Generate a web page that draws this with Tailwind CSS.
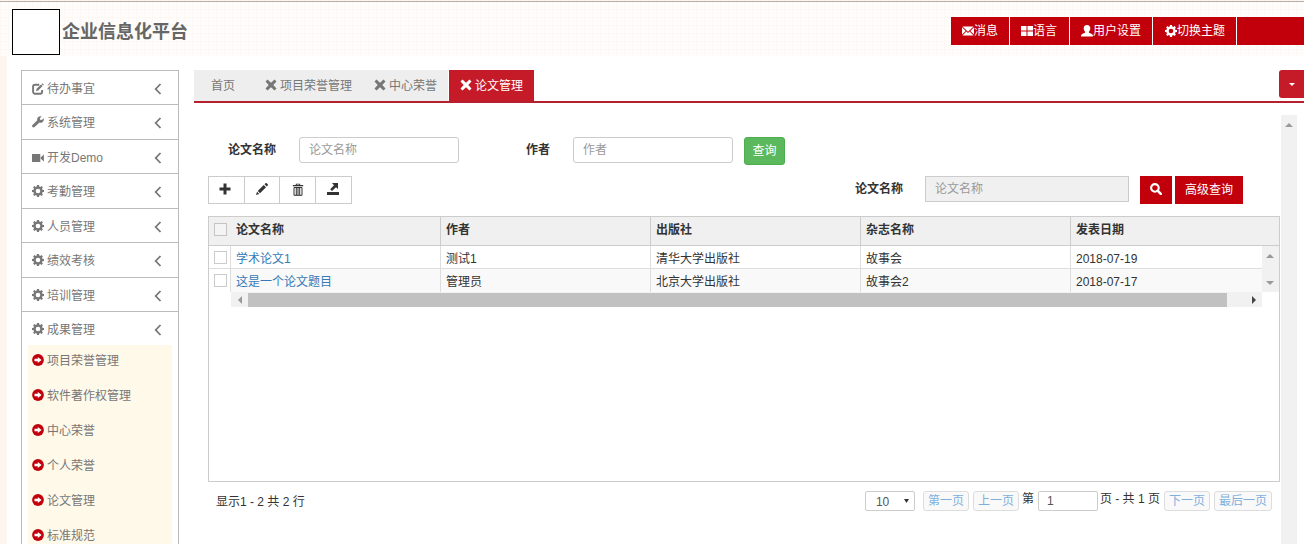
<!DOCTYPE html>
<html lang="zh-CN">
<head>
<meta charset="utf-8">
<title>企业信息化平台</title>
<script src="https://cdn.jsdelivr.net/npm/@tailwindcss/browser@4"></script>
</head>
<body class="flex h-screen flex-col overflow-hidden bg-white font-['Liberation_Sans','Noto_Sans_CJK_SC',sans-serif] text-xs text-[#333]">
<svg class="hidden" aria-hidden="true">
  <symbol id="edit" viewBox="0 0 12 12"><path d="M7.300 1.700H3A1.900 1.900 0 0 0 1.100 3.600v5.200a1.900 1.900 0 0 0 1.900 1.900h5.200a1.900 1.900 0 0 0 1.900-1.900V7" fill="none" stroke="currentColor" stroke-width="1.900"/><path d="M4 8.100l.6-2.300 4.400-4.300 1.600 1.600-4.400 4.400zM9.500 1l.8-.8 1.600 1.600-.8.8z" fill="currentColor"/></symbol>
  <symbol id="wrench" viewBox="0 0 12 12"><path d="M11.700 2.200L9.800 4.100 8.200 3.700 7.800 2.200 9.700.3C8.300-.1 6.900.2 6 1.200c-.8.8-1 2-.7 3L.5 8.900c-.6.6-.6 1.500 0 2.100.6.6 1.500.6 2.100 0L7.500 6.600c1.100.4 2.300.1 3.200-.7 1-1 1.400-2.400 1-3.700z" fill="currentColor"/></symbol>
  <symbol id="video" viewBox="0 0 12 12"><path d="M0 2h8.300v8H0zM8.800 5.300L11.900 2.500v7L8.800 6.700z" fill="currentColor"/></symbol>
  <symbol id="cog" viewBox="0 0 12 12"><path fill="currentColor" fill-rule="evenodd" d="M5 0h2l.3 1.600 1 .4L9.600 1.100 10.900 2.400 10 3.700l.4 1L12 5v2l-1.600.3-.4 1 .9 1.300-1.300 1.300L8.300 10l-1 .4L7 12H5l-.3-1.600-1-.4-1.300.9L1.100 9.600 2 8.300l-.4-1L0 7V5l1.600-.3.4-1L1.100 2.400 2.400 1.100 3.700 2l1-.4zM6 3.700a2.300 2.300 0 1 0 0 4.600 2.300 2.300 0 0 0 0-4.600z"/></symbol>
  <symbol id="chevron" viewBox="0 0 8 12"><path d="M6.500 1L1.700 6l4.800 5" fill="none" stroke="currentColor" stroke-width="1.800"/></symbol>
  <symbol id="go" viewBox="0 0 12 12"><circle cx="6" cy="6" r="5.900" fill="currentColor"/><path d="M2.500 4.800h3.300V2.900L9.600 6 5.800 9.100V7.200H2.500z" fill="#fff"/></symbol>
  <symbol id="mail" viewBox="0 0 12 10"><path d="M.4.500h11.200L6 5.800zM0 1.300L3.700 4.900 0 8.500zM12 1.300v7.200L8.300 4.900zM4.400 5.600L6 7.100l1.600-1.500 4 3.900H.4z" fill="currentColor"/></symbol>
  <symbol id="tiles" viewBox="0 0 12 10"><path d="M0 0h5.500v4.500H0zM6.500 0H12v4.500H6.500zM0 5.500h5.500V10H0zM6.500 5.500H12V10H6.500z" fill="currentColor"/></symbol>
  <symbol id="user" viewBox="0 0 12 12"><path d="M6 0c2.100 0 3.300 1.300 3.300 3.200 0 1.300-.6 2.700-1.400 3.500v1c1.700.7 3.700 1.400 3.900 2.400.1.500.2 1 .2 1.400H0c0-.4.1-.9.200-1.400.2-1 2.200-1.700 3.900-2.400v-1c-.8-.8-1.400-2.200-1.400-3.500C2.700 1.300 3.900 0 6 0z" fill="currentColor"/></symbol>
  <symbol id="cross" viewBox="0 0 12 12"><path d="M2.500.5L6 3.700 9.500.5l2 2L8.300 6l3.200 3.500-2 2L6 8.300l-3.500 3.200-2-2L3.700 6 .5 2.500z" fill="currentColor"/></symbol>
  <symbol id="plus" viewBox="0 0 12 12"><path d="M4.500 .5h3v4h4v3h-4v4h-3v-4h-4v-3h4z" fill="currentColor"/></symbol>
  <symbol id="pencil" viewBox="0 0 12 12"><path d="M0 12l1-3.300 2.300 2.300zM1.700 8l6-6L10 4.300l-6 6zM8.500 1.200L9.500.3c.4-.4.8-.4 1.200 0l1 1c.4.4.4.8 0 1.200l-.9 1z" fill="currentColor"/></symbol>
  <symbol id="trash" viewBox="0 0 12 13"><path d="M.8 3.200V2h3V.7h4.400V2h3v1.200M4.800 2h2.400v-.4H4.800z" fill="currentColor" fill-rule="evenodd"/><path d="M2 4.500h8v7.800H2zM4.300 5v7M6 5v7M7.700 5v7" fill="none" stroke="currentColor"/></symbol>
  <symbol id="export" viewBox="0 0 12 12"><path d="M0 9h12v3H0zM5 0h6v6L9 4.200 5 8 3.200 6.200 7 2.200z" fill="currentColor"/></symbol>
  <symbol id="search" viewBox="0 0 12 12"><circle cx="4.900" cy="4.900" r="3.800" fill="none" stroke="currentColor" stroke-width="2.100"/><path d="M7.600 7.600l3.200 3.200" stroke="currentColor" stroke-width="2.600" stroke-linecap="round"/></symbol>
  <symbol id="up" viewBox="0 0 8 4"><path d="M4 0l4 4H0z" fill="currentColor"/></symbol>
  <symbol id="down" viewBox="0 0 8 4"><path d="M0 0h8L4 4z" fill="currentColor"/></symbol>
  <symbol id="caret" viewBox="0 0 5 4"><path d="M0 0h5L2.500 4z" fill="currentColor"/></symbol>
  <symbol id="left" viewBox="0 0 4 8"><path d="M4 0v8L0 4z" fill="currentColor"/></symbol>
  <symbol id="right" viewBox="0 0 4 8"><path d="M0 0v8l4-4z" fill="currentColor"/></symbol>
</svg>

<header class="flex h-14 shrink-0 items-start justify-between border-t border-[#fdf5f0] bg-[#fffdfb] bg-[linear-gradient(#fdf8f3_1px,transparent_1px),linear-gradient(90deg,#fdf8f3_1px,transparent_1px)] bg-size-[8px_8px]">
  <div class="flex w-full items-start justify-between border-t border-[#b5aea9]">
    <div class="flex items-center gap-0.5 pt-[7px] pl-3">
      <div class="h-[46px] w-12 border border-black bg-white"></div>
      <h1 class="text-lg leading-6 font-bold text-[#666]">企业信息化平台</h1>
    </div>
    <nav class="mt-[15px] flex h-7 gap-px bg-white text-white">
      <a href="#" class="flex items-center bg-[#c2000b] px-[11px]"><svg class="h-2.5 w-3"><use href="#mail"/></svg>消息</a>
      <a href="#" class="flex items-center bg-[#c2000b] pr-3 pl-[11px]"><svg class="h-2.5 w-3"><use href="#tiles"/></svg>语言</a>
      <a href="#" class="flex items-center bg-[#c2000b] px-[11px]"><svg class="size-3"><use href="#user"/></svg>用户设置</a>
      <a href="#" class="flex items-center bg-[#c2000b] pr-[11px] pl-3"><svg class="size-3"><use href="#cog"/></svg>切换主题</a>
      <span class="w-[67px] bg-[#c2000b]"></span>
    </nav>
  </div>
</header>

<div class="flex min-h-0 flex-1">
  <div class="w-[7px] shrink-0 bg-[#fff5ef]"></div>

  <aside class="mt-3.5 ml-3.5 w-[158px] shrink-0 overflow-hidden border border-b-0 border-[#bbb] text-[#777]">
    <ul>
      <li class="border-b border-[#bbb]"><a href="#" class="flex h-[33px] items-center gap-[3px] pt-0.5 pr-4 pl-2.5"><svg class="size-3"><use href="#edit"/></svg><span class="flex-1">待办事宜</span><svg class="h-3 w-2"><use href="#chevron"/></svg></a></li>
      <li class="border-b border-[#bbb]"><a href="#" class="flex h-[34px] items-center gap-[3px] pt-0.5 pr-4 pl-2.5"><svg class="mb-0.5 size-3"><use href="#wrench"/></svg><span class="flex-1">系统管理</span><svg class="h-3 w-2"><use href="#chevron"/></svg></a></li>
      <li class="border-b border-[#bbb]"><a href="#" class="flex h-[33px] items-center gap-[3px] pt-0.5 pr-4 pl-2.5"><svg class="size-3"><use href="#video"/></svg><span class="flex-1">开发Demo</span><svg class="h-3 w-2"><use href="#chevron"/></svg></a></li>
      <li class="border-b border-[#bbb]"><a href="#" class="flex h-[34px] items-center gap-[3px] pt-0.5 pr-4 pl-2.5"><svg class="mb-0.5 size-3"><use href="#cog"/></svg><span class="flex-1">考勤管理</span><svg class="h-3 w-2"><use href="#chevron"/></svg></a></li>
      <li class="border-b border-[#bbb]"><a href="#" class="flex h-[33px] items-center gap-[3px] pt-0.5 pr-4 pl-2.5"><svg class="mb-0.5 size-3"><use href="#cog"/></svg><span class="flex-1">人员管理</span><svg class="h-3 w-2"><use href="#chevron"/></svg></a></li>
      <li class="border-b border-[#bbb]"><a href="#" class="flex h-[34px] items-center gap-[3px] pt-0.5 pr-4 pl-2.5"><svg class="mb-0.5 size-3"><use href="#cog"/></svg><span class="flex-1">绩效考核</span><svg class="h-3 w-2"><use href="#chevron"/></svg></a></li>
      <li class="border-b border-[#bbb]"><a href="#" class="flex h-[33px] items-center gap-[3px] pt-0.5 pr-4 pl-2.5"><svg class="mb-0.5 size-3"><use href="#cog"/></svg><span class="flex-1">培训管理</span><svg class="h-3 w-2"><use href="#chevron"/></svg></a></li>
      <li>
        <a href="#" class="flex h-[33px] items-center gap-[3px] pt-[3px] pr-4 pl-2.5"><svg class="mb-0.5 size-3"><use href="#cog"/></svg><span class="flex-1">成果管理</span><svg class="h-3 w-2"><use href="#chevron"/></svg></a>
        <ul class="mx-1.5 bg-[#fff9e9] pb-4">
          <li><a href="#" class="flex h-[35px] items-center gap-[3px] pb-1 pl-1"><svg class="mb-0.5 size-3 text-[#c2000b]"><use href="#go"/></svg>项目荣誉管理</a></li>
          <li><a href="#" class="flex h-[35px] items-center gap-[3px] pb-1 pl-1"><svg class="mb-0.5 size-3 text-[#c2000b]"><use href="#go"/></svg>软件著作权管理</a></li>
          <li><a href="#" class="flex h-[35px] items-center gap-[3px] pb-1 pl-1"><svg class="mb-0.5 size-3 text-[#c2000b]"><use href="#go"/></svg>中心荣誉</a></li>
          <li><a href="#" class="flex h-[35px] items-center gap-[3px] pb-1 pl-1"><svg class="mb-0.5 size-3 text-[#c2000b]"><use href="#go"/></svg>个人荣誉</a></li>
          <li><a href="#" class="flex h-[35px] items-center gap-[3px] pb-1 pl-1"><svg class="mb-0.5 size-3 text-[#c2000b]"><use href="#go"/></svg>论文管理</a></li>
          <li><a href="#" class="flex h-[35px] items-center gap-[3px] pb-1 pl-1"><svg class="mb-0.5 size-3 text-[#c2000b]"><use href="#go"/></svg>标准规范</a></li>
        </ul>
      </li>
    </ul>
  </aside>

  <main class="mt-3.5 ml-[15px] flex min-w-0 flex-1 flex-col">
    <div class="flex items-start justify-between border-b-2 border-[#b5202e]">
      <div class="flex h-[31px] text-[#777]">
        <a href="#" class="flex items-center bg-[#eee] pr-3.5 pl-[17px]">首页</a>
        <a href="#" class="flex items-center gap-[3px] bg-[#eee] pr-[11px] pl-4"><svg class="mb-0.5 size-3"><use href="#cross"/></svg>项目荣誉管理</a>
        <a href="#" class="flex items-center gap-[3px] bg-[#eee] px-[11px]"><svg class="mb-0.5 size-3"><use href="#cross"/></svg>中心荣誉</a>
        <a href="#" class="ml-px flex items-center gap-[3px] bg-[#c51a28] px-[11px] text-white"><svg class="mb-0.5 size-3"><use href="#cross"/></svg>论文管理</a>
      </div>
      <button type="button" aria-label="更多" class="flex h-7 w-[25px] items-center justify-center rounded-l-[3px] bg-[#c51a28] text-white"><svg class="h-[3px] w-1.5"><use href="#down"/></svg></button>
    </div>

    <div class="mt-3 mr-[7px] flex min-h-0 flex-1">
      <div class="ml-3.5 flex min-w-0 flex-1 flex-col pt-[22px]">
        <form class="flex items-start">
          <label for="title" class="w-[91px] pl-5 leading-[26px] font-bold">论文名称</label>
          <input id="title" type="text" placeholder="论文名称" class="h-[26px] w-40 rounded-[3px] border border-[#ccc] px-[9px] placeholder:text-[#999]">
          <label for="author" class="w-[114px] pl-[67px] leading-[26px] font-bold">作者</label>
          <input id="author" type="text" placeholder="作者" class="h-[26px] w-40 rounded-[3px] border border-[#ccc] px-[9px] placeholder:text-[#999]">
          <button type="button" class="ml-[11px] h-7 w-[41px] rounded-[3px] border border-[#4cae4c] bg-[#5cb85c] text-white">查询</button>
        </form>

        <div class="mt-[11px] flex items-start justify-between">
          <div class="flex h-7 divide-x divide-[#ccc] border border-[#ccc] pr-px pb-0.5">
            <button type="button" aria-label="新增" class="-mb-0.5 flex w-9 items-center justify-center pr-1 pb-0.5"><svg class="size-3"><use href="#plus"/></svg></button>
            <button type="button" aria-label="编辑" class="-mb-0.5 flex w-[35px] items-center justify-center pb-0.5"><svg class="size-3"><use href="#pencil"/></svg></button>
            <button type="button" aria-label="删除" class="-mb-0.5 flex w-9 items-center justify-center pb-0.5"><svg class="h-[13px] w-3"><use href="#trash"/></svg></button>
            <button type="button" aria-label="导出" class="-mb-0.5 flex w-[34px] items-center justify-center pb-0.5"><svg class="size-3"><use href="#export"/></svg></button>
          </div>
          <div class="mr-[37px] flex items-start">
            <label for="quick" class="mr-[22px] leading-[26px] font-bold">论文名称</label>
            <input id="quick" type="text" placeholder="论文名称" class="mr-[11px] h-[26px] w-51 border border-[#ccc] bg-[#f0f0f0] px-[9px] placeholder:text-[#999]">
            <button type="button" aria-label="搜索" class="mr-[3px] flex h-7 w-8 items-center justify-center bg-[#c2000b] pb-0.5 text-white"><svg class="size-3"><use href="#search"/></svg></button>
            <button type="button" class="h-7 bg-[#c2000b] px-2.5 text-white">高级查询</button>
          </div>
        </div>

        <div class="mt-3 h-[266px] shrink-0 border border-[#ccc]">
          <table class="w-full table-fixed border-separate border-spacing-0 text-left">
            <colgroup><col class="w-[22px]"><col class="w-[210px]"><col class="w-[210px]"><col class="w-[210px]"><col class="w-[210px]"><col><col class="w-[17px]"></colgroup>
            <thead class="bg-[#f0f0f0]">
              <tr class="h-[29px]">
                <th class="border-b border-[#ccc] pb-1 pl-[5px]"><input type="checkbox" aria-label="全选" class="block size-[13px] appearance-none border border-[#c4c4c4] bg-[#f4f4f4]"></th>
                <th class="border-r border-b border-[#ccc] pb-0.5 pl-[5px]">论文名称</th>
                <th class="border-r border-b border-[#ccc] pb-0.5 pl-[5px]">作者</th>
                <th class="border-r border-b border-[#ccc] pb-0.5 pl-[5px]">出版社</th>
                <th class="border-r border-b border-[#ccc] pb-0.5 pl-[5px]">杂志名称</th>
                <th colspan="2" class="border-b border-[#ccc] pb-0.5 pl-[5px]">发表日期</th>
              </tr>
            </thead>
            <tbody>
              <tr class="h-[23px]">
                <td class="border-r border-b border-[#ddd] pl-[5px]"><input type="checkbox" aria-label="选择 学术论文1" class="block size-[13px] appearance-none border border-[#ccc]"></td>
                <td class="border-r border-b border-[#ddd] pt-1 pl-[5px]"><a href="#" class="text-[#337ab7]">学术论文1</a></td>
                <td class="border-r border-b border-[#ddd] pt-1 pl-[5px]">测试1</td>
                <td class="border-r border-b border-[#ddd] pt-1 pl-[5px]">清华大学出版社</td>
                <td class="border-r border-b border-[#ddd] pt-1 pl-[5px]">故事会</td>
                <td class="border-b border-[#ddd] pt-1 pl-[5px]">2018-07-19</td>
                <td rowspan="2" class="bg-[#f1f1f1] text-[#999]"><div class="flex h-[45px] flex-col items-center justify-between py-[7px]"><svg class="h-1 w-2"><use href="#up"/></svg><svg class="h-1 w-2"><use href="#down"/></svg></div></td>
              </tr>
              <tr class="h-[23px] bg-[#f9f9f9]">
                <td class="border-r border-[#ddd] bg-white pl-[5px]"><input type="checkbox" aria-label="选择 这是一个论文题目" class="block size-[13px] appearance-none border border-[#ccc] bg-white"></td>
                <td class="border-r border-[#ddd] pt-0.5 pl-[5px]"><a href="#" class="text-[#337ab7]">这是一个论文题目</a></td>
                <td class="border-r border-[#ddd] pt-0.5 pl-[5px]">管理员</td>
                <td class="border-r border-[#ddd] pt-0.5 pl-[5px]">北京大学出版社</td>
                <td class="border-r border-[#ddd] pt-0.5 pl-[5px]">故事会2</td>
                <td class="pt-0.5 pl-[5px]">2018-07-17</td>
              </tr>
            </tbody>
          </table>
          <div class="mr-[17px] ml-[22px] flex h-[15px] items-center bg-[#f1f1f1]">
            <span class="flex w-[17px] justify-center text-[#999]"><svg class="h-2 w-1"><use href="#left"/></svg></span>
            <span class="h-3.5 flex-1 bg-[#c1c1c1]"></span>
            <span class="flex w-[35px] justify-end pr-1.5 text-[#444]"><svg class="h-2 w-1"><use href="#right"/></svg></span>
          </div>
        </div>

        <div class="mt-[9px] flex items-start justify-between px-2">
          <p class="pt-px leading-5">显示1 - 2 共 2 行</p>
          <div class="flex items-start leading-4">
            <div class="relative mr-2">
              <select aria-label="每页行数" class="block h-5 w-[50px] appearance-none rounded-[2px] border border-[#ccc] bg-white pt-0.5 pl-2.5 text-[#555]"><option>10</option></select>
              <svg class="pointer-events-none absolute top-2 right-1.5 h-1 w-[5px] text-[#333]"><use href="#caret"/></svg>
            </div>
            <button type="button" class="mr-1 h-5 rounded-[3px] border border-[#ddd] bg-[#f9f9f9] px-1 leading-[18px] text-[#7fb0dc]">第一页</button>
            <button type="button" class="mr-[3px] h-5 rounded-[3px] border border-[#ddd] bg-[#f9f9f9] px-1 leading-[18px] text-[#7fb0dc]">上一页</button>
            <label for="page">第</label>
            <input id="page" type="text" value="1" class="mr-0.5 ml-1 h-5 w-15 rounded-[2px] border border-[#ccc] px-2 text-[#555]">
            <span class="mr-1">页 - 共 1 页</span>
            <button type="button" class="mr-1 h-5 rounded-[3px] border border-[#ddd] bg-[#f9f9f9] px-1 leading-[18px] text-[#7fb0dc]">下一页</button>
            <button type="button" class="h-5 rounded-[3px] border border-[#ddd] bg-[#f9f9f9] px-1 leading-[18px] text-[#7fb0dc]">最后一页</button>
          </div>
        </div>
      </div>
      <div class="ml-px flex w-4 justify-center bg-[#f1f1f1] pt-2 text-[#999]"><svg class="h-1 w-2"><use href="#up"/></svg></div>
    </div>
  </main>
</div>
</body>
</html>
